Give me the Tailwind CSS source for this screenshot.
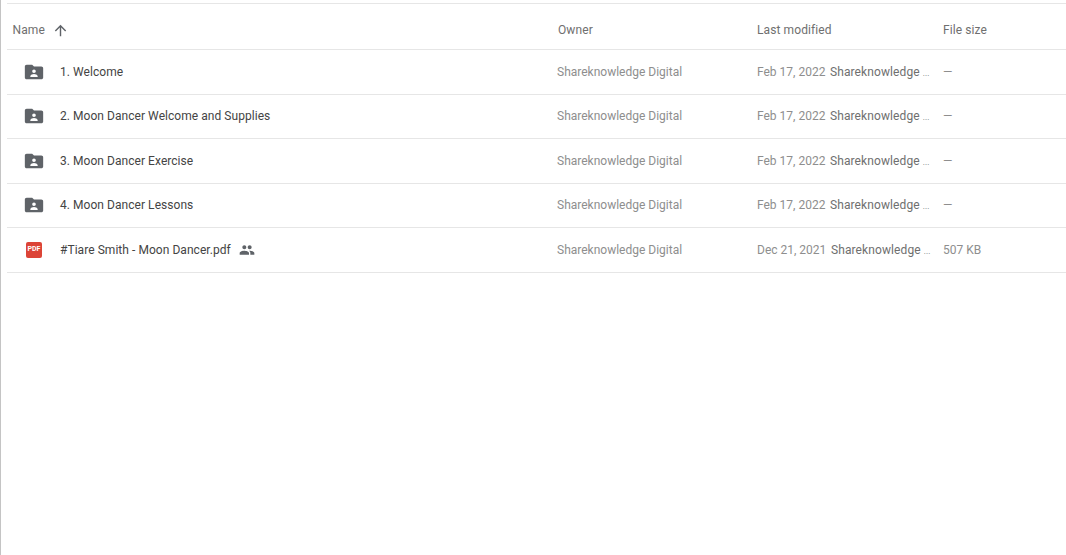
<!DOCTYPE html>
<html>
<head>
<meta charset="utf-8">
<script src="https://cdn.jsdelivr.net/npm/@tailwindcss/browser@4"></script>
</head>
<body class="bg-white overflow-hidden">
<div class="w-[1066px] h-[555px] border-l border-[#c4c4c4] pt-[3px] pl-[6px] font-['Roboto',sans-serif] text-[12px] overflow-hidden">
  <div class="border-t border-[#e6e6e6]">
    <div class="flex items-center h-[46px] pt-[7px] border-b border-[#e6e6e6] text-[#6f6f6f] font-[450] tracking-[0.1px]">
      <div class="w-[551px] pl-[5.500px] flex items-center gap-[7.500px]"><span>Name</span>
        <svg class="w-[17px] h-[17px]" viewBox="0 0 24 24" fill="#5f6368"><path d="M4 12l1.410 1.410L11 7.830V20h2V7.830l5.580 5.590L20 12l-8-8-8 8z"/></svg>
      </div>
      <div class="w-[199px]">Owner</div>
      <div class="w-[186px]">Last modified</div>
      <div>File size</div>
    </div>

    <div class="flex items-center h-[44.500px] border-b border-[#e6e6e6] text-[#444444]">
      <div class="w-[550px] flex items-center font-[450] tracking-[0.05px]"><div class="w-[53px] pl-[16px]"><svg class="w-[22px] h-[22px]" viewBox="0 0 24 24" fill="#5f6368"><path fill-rule="evenodd" d="M20 6h-8l-2-2H4c-1.100 0-2 .900-2 2v12c0 1.100.900 2 2 2h16c1.100 0 2-.900 2-2V8c0-1.100-.900-2-2-2zm-8 3.200a2 2 0 1 1 0 4 2 2 0 0 1 0-4zM16 17.500H8v-1c0-1.400 2.670-2.200 4-2.200s4 .800 4 2.200v1z"/></svg></div><span>1. Welcome</span></div>
      <div class="w-[200px] text-[#8e8e8e]">Shareknowledge Digital</div>
      <div class="w-[186px] flex items-center"><span class="w-[73px] text-[#8e8e8e]">Feb 17, 2022</span><span class="text-[#6f6f6f] tracking-[0.1px]">Shareknowledge <span class="text-[8px]">...</span></span></div>
      <div class="text-[#8e8e8e]">—</div>
    </div>

    <div class="flex items-center h-[44.500px] border-b border-[#e6e6e6] text-[#444444]">
      <div class="w-[550px] flex items-center font-[450] tracking-[0.05px]"><div class="w-[53px] pl-[16px]"><svg class="w-[22px] h-[22px]" viewBox="0 0 24 24" fill="#5f6368"><path fill-rule="evenodd" d="M20 6h-8l-2-2H4c-1.100 0-2 .900-2 2v12c0 1.100.900 2 2 2h16c1.100 0 2-.900 2-2V8c0-1.100-.900-2-2-2zm-8 3.200a2 2 0 1 1 0 4 2 2 0 0 1 0-4zM16 17.500H8v-1c0-1.400 2.670-2.200 4-2.200s4 .800 4 2.200v1z"/></svg></div><span>2. Moon Dancer Welcome and Supplies</span></div>
      <div class="w-[200px] text-[#8e8e8e]">Shareknowledge Digital</div>
      <div class="w-[186px] flex items-center"><span class="w-[73px] text-[#8e8e8e]">Feb 17, 2022</span><span class="text-[#6f6f6f] tracking-[0.1px]">Shareknowledge <span class="text-[8px]">...</span></span></div>
      <div class="text-[#8e8e8e]">—</div>
    </div>

    <div class="flex items-center h-[44.500px] border-b border-[#e6e6e6] text-[#444444]">
      <div class="w-[550px] flex items-center font-[450] tracking-[0.05px]"><div class="w-[53px] pl-[16px]"><svg class="w-[22px] h-[22px]" viewBox="0 0 24 24" fill="#5f6368"><path fill-rule="evenodd" d="M20 6h-8l-2-2H4c-1.100 0-2 .900-2 2v12c0 1.100.900 2 2 2h16c1.100 0 2-.900 2-2V8c0-1.100-.900-2-2-2zm-8 3.200a2 2 0 1 1 0 4 2 2 0 0 1 0-4zM16 17.500H8v-1c0-1.400 2.670-2.200 4-2.200s4 .800 4 2.200v1z"/></svg></div><span>3. Moon Dancer Exercise</span></div>
      <div class="w-[200px] text-[#8e8e8e]">Shareknowledge Digital</div>
      <div class="w-[186px] flex items-center"><span class="w-[73px] text-[#8e8e8e]">Feb 17, 2022</span><span class="text-[#6f6f6f] tracking-[0.1px]">Shareknowledge <span class="text-[8px]">...</span></span></div>
      <div class="text-[#8e8e8e]">—</div>
    </div>

    <div class="flex items-center h-[44.500px] border-b border-[#e6e6e6] text-[#444444]">
      <div class="w-[550px] flex items-center font-[450] tracking-[0.05px]"><div class="w-[53px] pl-[16px]"><svg class="w-[22px] h-[22px]" viewBox="0 0 24 24" fill="#5f6368"><path fill-rule="evenodd" d="M20 6h-8l-2-2H4c-1.100 0-2 .900-2 2v12c0 1.100.900 2 2 2h16c1.100 0 2-.900 2-2V8c0-1.100-.900-2-2-2zm-8 3.200a2 2 0 1 1 0 4 2 2 0 0 1 0-4zM16 17.500H8v-1c0-1.400 2.670-2.200 4-2.200s4 .800 4 2.200v1z"/></svg></div><span>4. Moon Dancer Lessons</span></div>
      <div class="w-[200px] text-[#8e8e8e]">Shareknowledge Digital</div>
      <div class="w-[186px] flex items-center"><span class="w-[73px] text-[#8e8e8e]">Feb 17, 2022</span><span class="text-[#6f6f6f] tracking-[0.1px]">Shareknowledge <span class="text-[8px]">...</span></span></div>
      <div class="text-[#8e8e8e]">—</div>
    </div>

    <div class="flex items-center h-[44.500px] border-b border-[#e6e6e6] text-[#444444]">
      <div class="w-[550px] flex items-center font-[450] tracking-[0.05px]"><div class="w-[53px] pl-[19px]"><div class="w-[16px] h-[16px] rounded-[2px] bg-[#dc4437] flex items-center justify-center text-white text-[7px] font-bold leading-none tracking-normal">PDF</div></div><span>#Tiare Smith - Moon Dancer.pdf</span>
        <svg class="w-[16px] h-[16px] ml-[8px]" viewBox="0 0 24 24" fill="#5f6368"><path d="M16 11c1.660 0 2.990-1.340 2.990-3S17.660 5 16 5s-3 1.340-3 3 1.340 3 3 3zm-8 0c1.660 0 2.990-1.340 2.990-3S9.660 5 8 5 5 6.340 5 8s1.340 3 3 3zm0 2c-2.330 0-7 1.170-7 3.500V19h14v-2.500c0-2.330-4.670-3.500-7-3.500zm8 0c-.290 0-.620.020-.970.050 1.160.840 1.970 1.970 1.970 3.450V19h6v-2.500c0-2.330-4.670-3.500-7-3.500z"/></svg>
      </div>
      <div class="w-[200px] text-[#8e8e8e]">Shareknowledge Digital</div>
      <div class="w-[186px] flex items-center"><span class="w-[74px] text-[#8e8e8e]">Dec 21, 2021</span><span class="text-[#6f6f6f] tracking-[0.1px]">Shareknowledge <span class="text-[8px]">...</span></span></div>
      <div class="text-[#8e8e8e]">507 KB</div>
    </div>
  </div>
</div>
</body>
</html>
